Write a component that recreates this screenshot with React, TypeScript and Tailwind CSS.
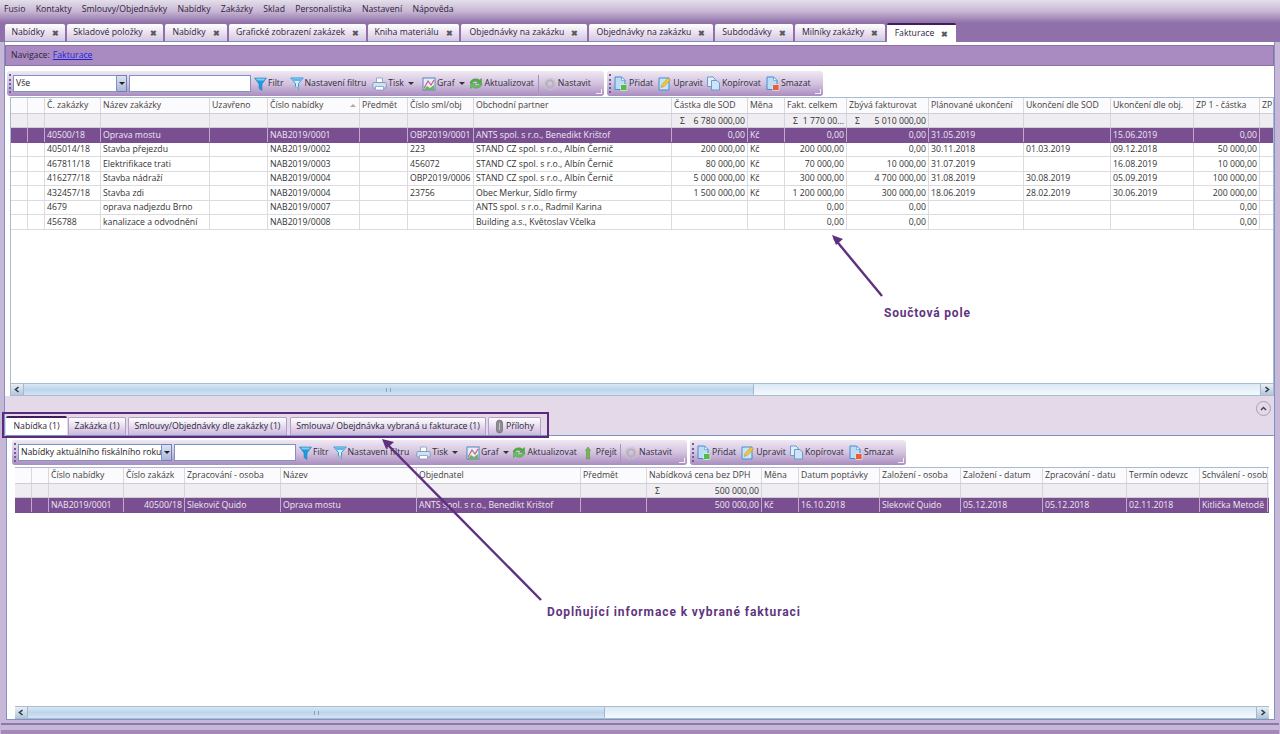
import type { ReactNode } from 'react';

const topCols = 'grid-cols-[17px_17px_56px_109px_58px_92px_48px_66px_198px_76px_37px_62px_82px_95px_87px_83px_66px_14px]';
const bottomCols = 'grid-cols-[17px_17px_75px_61px_96px_136px_164px_66px_115px_37px_81px_81px_82px_84px_73px_68px]';

type Cell = string | { t: string; r?: boolean; sum?: boolean };
const R = (t: string): Cell => ({ t, r: true });
const S = (t: string): Cell => ({ t, sum: true });

const topHead = ['', '', 'Č. zakázky', 'Název zakázky', 'Uzavřeno', 'Číslo nabídky', 'Předmět', 'Číslo sml/obj', 'Obchodní partner', 'Částka dle SOD', 'Měna', 'Fakt. celkem', 'Zbývá fakturovat', 'Plánované ukončení', 'Ukončení dle SOD', 'Ukončení dle obj.', 'ZP 1 - částka', 'ZP'];
const topSum: Cell[] = ['', '', '', '', '', '', '', '', '', S('6 780 000,00'), '', S('1 770 00...'), S('5 010 000,00'), '', '', '', '', ''];
const topRows: Cell[][] = [
  ['', '', '40500/18', 'Oprava mostu', '', 'NAB2019/0001', '', 'OBP2019/0001', 'ANTS spol. s r.o., Benedikt Krištof', R('0,00'), 'Kč', R('0,00'), R('0,00'), '31.05.2019', '', '15.06.2019', R('0,00'), ''],
  ['', '', '405014/18', 'Stavba přejezdu', '', 'NAB2019/0002', '', '223', 'STAND CZ spol. s r.o., Albín Černič', R('200 000,00'), 'Kč', R('200 000,00'), R('0,00'), '30.11.2018', '01.03.2019', '09.12.2018', R('50 000,00'), ''],
  ['', '', '467811/18', 'Elektrifikace trati', '', 'NAB2019/0003', '', '456072', 'STAND CZ spol. s r.o., Albín Černič', R('80 000,00'), 'Kč', R('70 000,00'), R('10 000,00'), '31.07.2019', '', '16.08.2019', R('10 000,00'), ''],
  ['', '', '416277/18', 'Stavba nádraží', '', 'NAB2019/0004', '', 'OBP2019/0006', 'STAND CZ spol. s r.o., Albín Černič', R('5 000 000,00'), 'Kč', R('300 000,00'), R('4 700 000,00'), '31.08.2019', '30.08.2019', '05.09.2019', R('100 000,00'), ''],
  ['', '', '432457/18', 'Stavba zdi', '', 'NAB2019/0004', '', '23756', 'Obec Merkur, Sídlo firmy', R('1 500 000,00'), 'Kč', R('1 200 000,00'), R('300 000,00'), '18.06.2019', '28.02.2019', '30.06.2019', R('200 000,00'), ''],
  ['', '', '4679', 'oprava nadjezdu Brno', '', 'NAB2019/0007', '', '', 'ANTS spol. s r.o., Radmil Karina', '', '', R('0,00'), R('0,00'), '', '', '', R('0,00'), ''],
  ['', '', '456788', 'kanalizace a odvodnění', '', 'NAB2019/0008', '', '', 'Building a.s., Květoslav Včelka', '', '', R('0,00'), R('0,00'), '', '', '', R('0,00'), ''],
];

const bottomHead = ['', '', 'Číslo nabídky', 'Číslo zakázk', 'Zpracování - osoba', 'Název', 'Objednatel', 'Předmět', 'Nabídková cena bez DPH', 'Měna', 'Datum poptávky', 'Založení - osoba', 'Založení - datum', 'Zpracování - datu', 'Termín odevzc', 'Schválení - osob'];
const bottomSum: Cell[] = ['', '', '', '', '', '', '', '', S('500 000,00'), '', '', '', '', '', '', ''];
const bottomRow: Cell[] = ['', '', 'NAB2019/0001', R('40500/18'), 'Slekovič Quido', 'Oprava mostu', 'ANTS spol. s r.o., Benedikt Krištof', '', R('500 000,00'), 'Kč', '16.10.2018', 'Slekovič Quido', '05.12.2018', '05.12.2018', '02.11.2018', 'Kitlička Metodě'];

function GridCell({ cell, cls }: { cell: Cell; cls: string }) {
  const c = typeof cell === 'string' ? { t: cell } : cell;
  return (
    <div className={`border-r overflow-hidden whitespace-nowrap px-[2px] pt-[1px] flex items-center ${cls} ${c.r ? 'justify-end' : ''} ${c.sum ? 'justify-between pl-[8px]' : ''}`}>
      {c.sum && <span>Σ</span>}
      <span>{c.t}</span>
    </div>
  );
}

function DataGrid({ cols, head, sum, rows, sortCol }: { cols: string; head: string[]; sum: Cell[]; rows: Cell[][]; sortCol?: number }) {
  return (
    <div className="text-[8.7px] leading-none text-[#333]">
      <div className={`grid ${cols} h-[15px] bg-[#fbfafc]`}>
        {head.map((h, i) => (
          <div key={i} className="relative border-r border-[#d8d8de] px-[2px] flex items-center overflow-hidden whitespace-nowrap text-[#3f3f3f]">
            {h}
            {sortCol === i && <span className="absolute right-[3px] top-[6px] w-0 h-0 border-x-[3px] border-x-transparent border-b-[3px] border-b-[#aaa]" />}
          </div>
        ))}
      </div>
      <div className={`grid ${cols} h-[15px] bg-[#efedf1] border-y border-[#cfcdd4]`}>
        {sum.map((c, i) => <GridCell key={i} cell={c} cls="border-[#d6d4da]" />)}
      </div>
      {rows.map((row, ri) => (
        <div key={ri} className={`grid ${cols} h-[14.5px] border-b ${ri === 0 ? 'bg-[#7a4f91] text-[#efe7f3] border-[#7a4f91]' : 'bg-white border-[#dcdce0]'}`}>
          {row.map((c, i) => <GridCell key={i} cell={c} cls={ri === 0 ? 'border-[#c2aacf]' : 'border-[#dcdce0]'} />)}
        </div>
      ))}
    </div>
  );
}

function ScrollBar({ thumb }: { thumb: string }) {
  return (
    <div className="flex h-[13px] border-y border-[#a9bccb] bg-gradient-to-b from-[#dbe9f6] to-[#f4f9fd]">
      <div className="w-[13px] flex items-center justify-center bg-gradient-to-b from-[#e8eef4] to-[#b4c6d9] border-r border-[#a8b8c8]">
        <svg width="6" height="7" viewBox="0 0 6 7"><path d="M4.500 1 1.500 3.500l3 2.500" fill="none" stroke="#2c3d52" strokeWidth="1.600" /></svg>
      </div>
      <div className={`${thumb} flex items-center justify-center bg-gradient-to-b from-[#d8e7f5] via-[#bdd5ec] to-[#d3e3f2] border-r border-[#9fb6cc] rounded-[1px]`}>
        <span className="w-[5px] h-[4px] border-x border-[#8ea4ba]" />
      </div>
      <div className="flex-1" />
      <div className="w-[13px] flex items-center justify-center bg-gradient-to-b from-[#e8eef4] to-[#b4c6d9] border-l border-[#a8b8c8]">
        <svg width="6" height="7" viewBox="0 0 6 7"><path d="M1.500 1l3 2.500-3 2.500" fill="none" stroke="#2c3d52" strokeWidth="1.600" /></svg>
      </div>
    </div>
  );
}

const Funnel = () => (
  <svg width="13" height="14" viewBox="0 0 13 14"><path d="M.5 1h12L8 7v6.500l-3-2V7z" fill="#1f9be0" stroke="#1c78b8" strokeWidth=".5" /><path d="M1.500 1.500h10L9.500 3.500h-6z" fill="#7fd0f4" /></svg>
);
const FunnelSet = () => (
  <svg width="14" height="14" viewBox="0 0 14 14"><path d="M.8 1h12.400L8.500 6.500V13l-3-1.500v-5z" fill="#d9eefa" stroke="#2f96d8" strokeWidth="1" /><path d="M1.800 1.500h10.400L10 4H4z" fill="#5cb8ea" /><path d="M3 9.500h5.500v3.500H5z" fill="#a9b8c4" /></svg>
);
const Printer = () => (
  <svg width="15" height="14" viewBox="0 0 15 14"><path d="M4.500 1h6v4.500h-6z" fill="#fff" stroke="#7d9dc4" strokeWidth=".8" /><rect x=".8" y="5.500" width="13.400" height="5.500" rx="1" fill="#d3e2f2" stroke="#6f92bd" strokeWidth=".8" /><path d="M3.500 9.500h8V13h-8z" fill="#fff" stroke="#7d9dc4" strokeWidth=".8" /></svg>
);
const Chart = () => (
  <svg width="14" height="14" viewBox="0 0 14 14"><rect x="1" y="1" width="12" height="12" fill="#e3eef9" stroke="#5686c4" strokeWidth="1" /><path d="M2 11 6 4l3 4 3-5" fill="none" stroke="#d0527e" strokeWidth="1.100" /><path d="M2 12l3-3 3 2 4-3v5H2z" fill="#74b25e" /></svg>
);
const Refresh = () => (
  <svg width="16" height="13" viewBox="0 0 16 13"><path d="M2 6C3 2 8 .5 11.500 3L13.500 1.500V6.500H8.500L10 5C8 3.800 5 4.200 4 6z" fill="#4fae45" stroke="#2f8a36" strokeWidth=".4" /><path d="M14 7C13 11 8 12.500 4.500 10L2.500 11.500V6.500H7.500L6 8C8 9.200 11 8.800 12 7z" fill="#68c05a" stroke="#2f8a36" strokeWidth=".4" /></svg>
);
const Gear = () => (
  <svg width="14" height="14" viewBox="0 0 14 14"><circle cx="7" cy="7" r="3.600" fill="none" stroke="#b8b2bc" strokeWidth="2.400" /><circle cx="7" cy="7" r="5.700" fill="none" stroke="#c9c4cc" strokeWidth="1.400" strokeDasharray="1.600 1.400" /></svg>
);
const Up = () => (
  <svg width="11" height="14" viewBox="0 0 11 14"><path d="M4 1 6.500 4.500H5.500V13h-3V4.500h-1z" fill="#78b84a" stroke="#4a8a2a" strokeWidth=".5" /></svg>
);
const Doc = ({ badge }: { badge: string }) => (
  <svg width="15" height="15" viewBox="0 0 15 15">
    <path d="M2 1h6.500L12 4.500V13.500H2z" fill="#bcdcf4" stroke="#3f8fd0" strokeWidth="1" />
    <path d="M8.500 1v3.500H12z" fill="#fff" stroke="#3f8fd0" strokeWidth=".6" />
    <rect x="7.500" y="8.500" width="6.500" height="6" rx="1" fill={badge} stroke="#fff" strokeWidth=".6" />
  </svg>
);
const Edit = () => (
  <svg width="15" height="15" viewBox="0 0 15 15"><path d="M2 2h10v12H2z" fill="#c9e2f6" stroke="#3f8fd0" strokeWidth="1" /><path d="M4 11.500l1-3 6-6.500 2.500 2-6.500 6.500z" fill="#efc83a" stroke="#b08a1c" strokeWidth=".5" /></svg>
);
const Copy = () => (
  <svg width="15" height="15" viewBox="0 0 15 15"><path d="M1.500 1h5.500l2 2v7.500H1.500z" fill="#e3eefa" stroke="#5a96d0" strokeWidth=".9" /><path d="M5.500 4.500h5.500l2.500 2.500v7H5.500z" fill="#cfe2f6" stroke="#5a96d0" strokeWidth=".9" /></svg>
);
const Clip = () => (
  <svg width="9" height="15" viewBox="0 0 9 15"><rect x="1.500" y="1" width="6" height="13" rx="3" fill="#8f8b94" stroke="#6d6a72" strokeWidth=".7" /><path d="M4.500 4v7" stroke="#c5c2c9" strokeWidth="1" /></svg>
);

function Tool({ icon, label, caret, cls = '' }: { icon: ReactNode; label: string; caret?: boolean; cls?: string }) {
  return (
    <div className={`flex items-center gap-[1px] whitespace-nowrap text-[8.7px] text-[#2f2a3a] ${cls}`}>
      {icon}
      <span>{label}</span>
      {caret && <span className="ml-[3px] w-0 h-0 border-x-[3px] border-x-transparent border-t-[3px] border-t-[#333]" />}
    </div>
  );
}

function Grip() {
  return <span className="w-[2px] h-[19px] ml-[2px] mr-[2px] border-l-2 border-dotted border-[#6f5a9c]" />;
}

function ToolPanel({ children, cls }: { children: ReactNode; cls: string }) {
  return (
    <div className={`relative flex items-center h-[25px] rounded-[3px] bg-gradient-to-b from-[#efe8f3] via-[#d4c3df] to-[#a98dbf] ${cls}`}>
      {children}
      <span className="absolute right-[2px] bottom-[2px] w-[6px] h-[5px] border-b border-r border-[#f4f0f6]" />
    </div>
  );
}

function EditTools({ cls }: { cls: string }) {
  return (
    <ToolPanel cls={`w-[216px] ${cls}`}>
      <Grip />
      <Tool icon={<Doc badge="#58b848" />} label="Přidat" />
      <Tool icon={<Edit />} label="Upravit" cls="ml-[4px]" />
      <Tool icon={<Copy />} label="Kopírovat" cls="ml-[3px]" />
      <Tool icon={<Doc badge="#e2603a" />} label="Smazat" cls="ml-[4px]" />
    </ToolPanel>
  );
}

const tabs = [
  ['Nabídky', 'w-[60px]'],
  ['Skladové položky', 'w-[96px]'],
  ['Nabídky', 'w-[62px]'],
  ['Grafické zobrazení zakázek', 'w-[137px]'],
  ['Kniha materiálu', 'w-[91px]'],
  ['Objednávky na zakázku', 'w-[126px]'],
  ['Objednávky na zakázku', 'w-[124px]'],
  ['Subdodávky', 'w-[78px]'],
  ['Milníky zakázky', 'w-[90px]'],
];

const menu = ['Fusio', 'Kontakty', 'Smlouvy/Objednávky', 'Nabídky', 'Zakázky', 'Sklad', 'Personalistika', 'Nastavení', 'Nápověda'];

export default function App() {
  return (
    <div className="relative w-[1280px] h-[734px] overflow-hidden flex flex-col bg-[#c8b8d8] font-['Open_Sans','Noto_Sans',sans-serif]">
      {/* menu */}
      <div className="h-[23px] shrink-0 flex items-start pt-[3px] pl-[4px] gap-[10.3px] text-[8.7px] text-[#2c2438] bg-gradient-to-b from-[#e4dfe9] via-[#c7b6d4] to-[#8f70a8]">
        {menu.map(m => <span key={m}>{m}</span>)}
      </div>

      {/* doc tabs */}
      <div className="h-[19px] shrink-0 flex items-end pl-[5px] gap-[2px] bg-[#8f70a8] text-[8.7px] text-[#2c2438]">
        {tabs.map(([t, w], i) => (
          <div key={i} className={`${w} h-[18px] flex items-center justify-center gap-[7px] whitespace-nowrap rounded-t-[2px] border-b border-[#7a8fc0] bg-gradient-to-b from-white to-[#d6c6e2]`}>
            {t}<span className="text-[8px] font-bold text-[#5a5a66]">✖</span>
          </div>
        ))}
        <div className="w-[69px] h-[19px] flex items-center justify-center gap-[7px] whitespace-nowrap rounded-t-[2px] border-t-2 border-[#3c1f5c] bg-white">
          Fakturace<span className="text-[8px] font-bold text-[#5a5a66]">✖</span>
        </div>
      </div>

      {/* upper panel */}
      <div className="h-[354px] shrink-0 flex flex-col ml-[4px] mr-[5px] bg-white border-x border-[#7f92c4]">
        <div className="h-[21px] shrink-0 mt-[3px] flex items-center pl-[5px] gap-[3px] text-[8.7px] text-[#2c2438] bg-[#a98bc2] border border-[#8c70a6]">
          Navigace: <span className="text-[#2222dd] underline">Fakturace</span>
        </div>
        <div className="h-[25px] shrink-0 mt-[5px] flex items-center pl-[2px]">
          <ToolPanel cls="w-[597px]">
            <Grip />
            <div className="w-[104px] h-[17px] pl-[2px] flex items-center bg-white border border-[#7f92c4] text-[8.7px] text-[#222]">Vše</div>
            <div className="w-[10px] h-[17px] flex items-center justify-center bg-gradient-to-b from-[#dce4f2] to-[#a9b8d8] border-y border-r border-[#6f7fb8]">
              <span className="w-0 h-0 border-x-[3px] border-x-transparent border-t-[3px] border-t-[#222]" />
            </div>
            <div className="w-[122px] h-[17px] ml-[2px] bg-white border border-[#7f92c4]" />
            <Tool icon={<Funnel />} label="Filtr" cls="ml-[3px]" />
            <Tool icon={<FunnelSet />} label="Nastavení filtru" cls="ml-[6px]" />
            <Tool icon={<Printer />} label="Tisk" caret cls="ml-[6px]" />
            <Tool icon={<Chart />} label="Graf" caret cls="ml-[8px]" />
            <Tool icon={<Refresh />} label="Aktualizovat" cls="ml-[3px]" />
            <span className="w-px h-[18px] bg-[#a595b3] mx-[4px]" />
            <Tool icon={<Gear />} label="Nastavit" />
          </ToolPanel>
          <EditTools cls="ml-[3px]" />
        </div>
        <div className="flex-1 min-h-0 mt-[1px] ml-[5px] w-[1264px] border border-b-0 border-[#a9bbd0] flex flex-col">
          <div className="flex-1 min-h-0 overflow-hidden">
            <DataGrid cols={topCols} head={topHead} sum={topSum} rows={topRows} sortCol={5} />
          </div>
          <ScrollBar thumb="w-[730px]" />
        </div>
      </div>

      {/* splitter and lower tabs */}
      <div className="h-[39px] shrink-0 flex flex-col justify-end relative bg-[#e3d9e9] ml-[4px] mr-[5px] border-x border-[#7f92c4]">
        <div className="absolute right-[3px] top-[5px] w-[15px] h-[15px] rounded-full border border-[#a8a0b0] flex items-center justify-center">
          <svg width="7" height="5" viewBox="0 0 7 5"><path d="M1 4l2.500-2.500L6 4" fill="none" stroke="#444" strokeWidth="1.400" /></svg>
        </div>
        <div className="flex items-end pl-[1px] text-[8.7px] text-[#2c2438] h-[19px]">
          <div className="w-[61px] h-[19px] flex items-center justify-center bg-white border-t-2 border-[#3c1f5c] rounded-t-[2px]">Nabídka (1)</div>
          <div className="ml-[1px] w-[58px] h-[18px] flex items-center justify-center whitespace-nowrap rounded-t-[2px] border border-b-0 border-[#b59fc6] bg-gradient-to-b from-white to-[#cdb9dc]">Zakázka (1)</div>
          <div className="ml-[2px] w-[159px] h-[18px] flex items-center justify-center whitespace-nowrap rounded-t-[2px] border border-b-0 border-[#b59fc6] bg-gradient-to-b from-white to-[#cdb9dc]">Smlouvy/Objednávky dle zakázky (1)</div>
          <div className="ml-[3px] w-[196px] h-[18px] flex items-center justify-center whitespace-nowrap rounded-t-[2px] border border-b-0 border-[#b59fc6] bg-gradient-to-b from-white to-[#cdb9dc]">Smlouva/ Obejdnávka vybraná u fakturace (1)</div>
          <div className="ml-[2px] w-[53px] h-[18px] flex items-center justify-center gap-[2px] rounded-t-[2px] border border-b-0 border-[#b59fc6] bg-gradient-to-b from-white to-[#cdb9dc]">
            <Clip />Přílohy
          </div>
        </div>
      </div>

      {/* lower panel */}
      <div className="h-[285px] shrink-0 flex flex-col ml-[6px] mr-[5px] bg-white border border-[#7f92c4]">
        <div className="h-[25px] shrink-0 mt-[4px] flex items-center pl-[5px]">
          <ToolPanel cls="w-[675px]">
            <Grip />
            <div className="w-[144px] h-[17px] pl-[2px] flex items-center bg-white border border-[#7f92c4] text-[8.7px] text-[#222] whitespace-nowrap overflow-hidden">Nabídky aktuálního fiskálního roku</div>
            <div className="w-[10px] h-[17px] flex items-center justify-center bg-gradient-to-b from-[#dce4f2] to-[#a9b8d8] border-y border-r border-[#6f7fb8]">
              <span className="w-0 h-0 border-x-[3px] border-x-transparent border-t-[3px] border-t-[#222]" />
            </div>
            <div className="w-[122px] h-[17px] ml-[2px] bg-white border border-[#7f92c4]" />
            <Tool icon={<Funnel />} label="Filtr" cls="ml-[3px]" />
            <Tool icon={<FunnelSet />} label="Nastavení filtru" cls="ml-[4px]" />
            <Tool icon={<Printer />} label="Tisk" caret cls="ml-[7px]" />
            <Tool icon={<Chart />} label="Graf" caret cls="ml-[8px]" />
            <Tool icon={<Refresh />} label="Aktualizovat" cls="ml-[2px]" />
            <Tool icon={<Up />} label="Přejít" cls="ml-[7px]" />
            <span className="w-px h-[18px] bg-[#a595b3] mx-[3px]" />
            <Tool icon={<Gear />} label="Nastavit" />
          </ToolPanel>
          <EditTools cls="ml-[3px]" />
        </div>
        <div className="flex-1 min-h-0 mt-[2px] ml-[8px] w-[1254px] border-t border-[#a9bbd0] flex flex-col">
          <div className="flex-1 min-h-0 overflow-hidden">
            <DataGrid cols={bottomCols} head={bottomHead} sum={bottomSum} rows={[bottomRow]} />
          </div>
          <ScrollBar thumb="w-[577px]" />
        </div>
      </div>

      {/* frame stripes at the bottom */}
      <div className="flex-1 mt-[3px] mx-[1px] border-t-2 border-[#8a78b2] border-b-4 border-b-[#a588b8] bg-[#c8b8d8]" />

      {/* annotations */}
      <div className="absolute left-[2px] top-[412px] w-[547px] h-[26px] border-2 border-[#5c2a7c]" />
      <svg className="absolute inset-0 pointer-events-none" width="1280" height="734" viewBox="0 0 1280 734">
        <g fill="none" stroke="#5f2f80" strokeWidth="2.400">
          <path d="M882 296 834 238" />
          <path d="M541 600 385 442" />
        </g>
        <g fill="#5f2f80">
          <path d="M832 235l11 4-7 6z" />
          <path d="M382 439l12 3-8 7z" />
        </g>
      </svg>
      <div className="absolute left-[884px] top-[304px] text-[12px] font-bold tracking-[0.8px] text-[#5f3580] font-['Roboto',sans-serif]">Součtová pole</div>
      <div className="absolute left-[547px] top-[603px] text-[12px] font-bold tracking-[0.9px] text-[#5f3580] font-['Roboto',sans-serif]">Doplňující informace k vybrané fakturaci</div>
    </div>
  );
}
